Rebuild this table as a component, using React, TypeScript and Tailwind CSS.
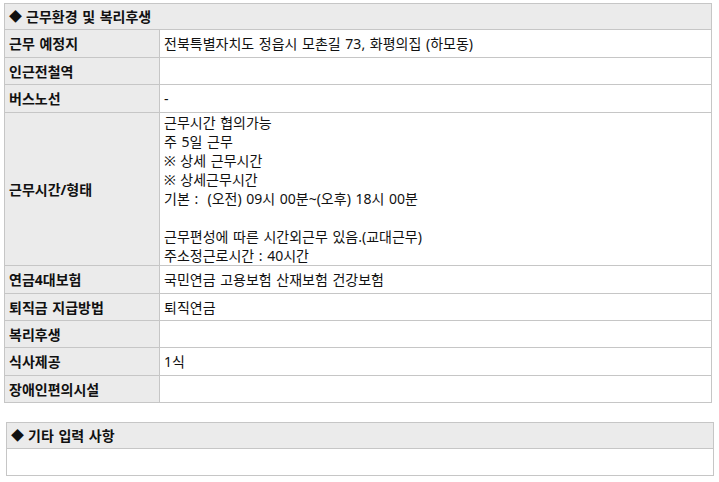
const font = "font-['Noto_Sans','Noto_Sans_CJK_KR',sans-serif]"

type Row = { label: string; h: string; value?: string[] }

const rows: Row[] = [
  { label: "근무 예정지", h: "h-[28px]", value: ["전북특별자치도 정읍시 모촌길 73, 화평의집 (하모동)"] },
  { label: "인근전철역", h: "h-[27px]" },
  { label: "버스노선", h: "h-[28px]", value: ["-"] },
  {
    label: "근무시간/형태",
    h: "h-[153px]",
    value: [
      "근무시간 협의가능",
      "주 5일 근무",
      "※ 상세 근무시간",
      "※ 상세근무시간",
      "기본 :  (오전) 09시 00분~(오후) 18시 00분",
      "",
      "근무편성에 따른 시간외근무 있음.(교대근무)",
      "주소정근로시간 : 40시간",
    ],
  },
  { label: "연금4대보험", h: "h-[28px]", value: ["국민연금 고용보험 산재보험 건강보험"] },
  { label: "퇴직금 지급방법", h: "h-[27px]", value: ["퇴직연금"] },
  { label: "복리후생", h: "h-[27px]" },
  { label: "식사제공", h: "h-[28px]", value: ["1식"] },
  { label: "장애인편의시설", h: "h-[27px]" },
]

function SectionHeader({ title }: { title: string }) {
  return (
    <div className="h-[25px] bg-[#ebebeb] flex items-center pl-[4px] font-bold text-[14px] [word-spacing:1px]">
      <span className="mr-[4px] text-[13px]">◆</span>
      {title}
    </div>
  )
}

export default function App() {
  return (
    <div className={`${font} bg-white text-[#111] w-[719px] h-[482px] pt-[3px] pl-[4px]`}>
      <div className="w-[708px] border border-[#c6c6c6]">
        <SectionHeader title="근무환경 및 복리후생" />
        {rows.map((row) => (
          <div key={row.label} className={`flex border-t border-[#c6c6c6] ${row.h}`}>
            <div className="w-[155px] shrink-0 bg-[#ebebeb] border-r border-[#c6c6c6] flex items-center pl-[4px] font-bold text-[14px] [word-spacing:1px]">
              {row.label}
            </div>
            <div className="flex-1 flex flex-col justify-center pl-[4px] text-[14px] leading-[19px] whitespace-pre [word-spacing:1px]">
              {row.value?.map((line, i) => (
                <div key={i} className="h-[19px]">
                  {line}
                </div>
              ))}
            </div>
          </div>
        ))}
      </div>

      <div className="w-[708px] ml-[2px] mt-[19px] border border-[#c6c6c6]">
        <SectionHeader title="기타 입력 사항" />
        <div className="h-[27px] border-t border-[#c6c6c6]" />
      </div>
    </div>
  )
}
